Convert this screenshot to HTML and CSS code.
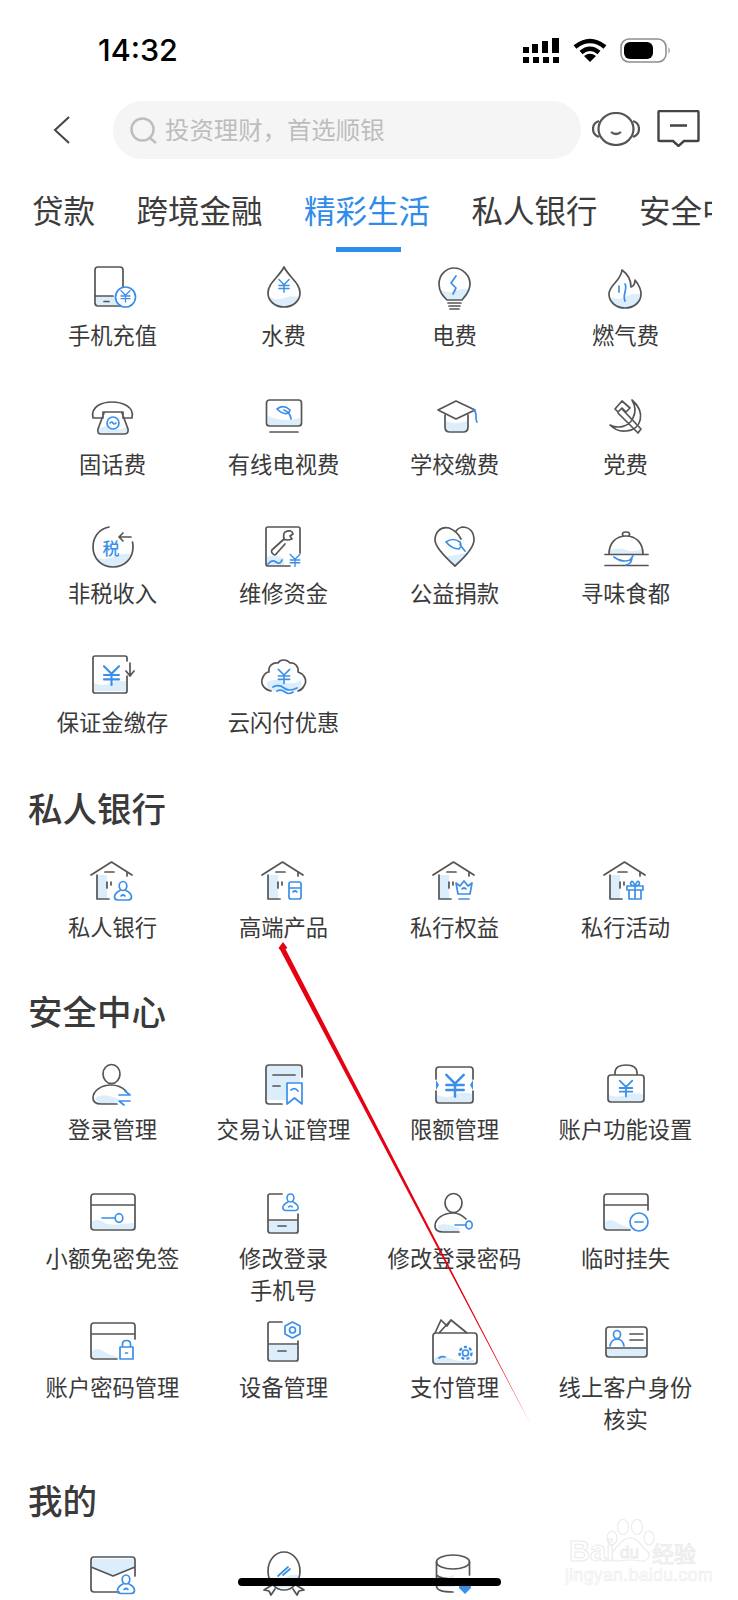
FILE: index.html
```html
<!DOCTYPE html>
<html lang="zh-CN">
<head>
<meta charset="utf-8">
<title>精彩生活</title>
<link rel="stylesheet" href="styles.css">
</head>
<body>
<svg class="defs" aria-hidden="true"><defs>
  <g id="y"><path class="b" d="M-6-7 0-1 6-7M0-1V8M-6 0H6M-6 3.500H6"/></g>
  <g id="house">
    <path class="f" d="M14 20h10v24H14z"/>
    <path class="s" d="M8 20 28.500 7 49 20M14 20V44H26M22 17H31M44 17v4M24 27v6M28 27v3"/>
  </g>
  <g id="person"><path class="b" d="M0-9a3.800 4.500 0 0 1 0 9 3.800 4.500 0 0 1 0-9zM-3 0C-7 2-8.500 5-8.500 6.500-8.500 8.500-7 9.500-5 9.500H5C7 9.500 8.500 8.500 8.500 6.500 8.500 5 7 2 3 0M-2 5.500Q0 3.500 2 5.500"/></g>
  <g id="card">
    <path class="f" d="M9 43V36Q14 32 20 36T38 43z"/>
    <path class="s" d="M34 44H11Q8 44 8 41V11Q8 8 11 8H49Q52 8 52 11V24M8 19H52"/>
  </g>
</defs></svg>

<div class="status">
  <span class="time">14:32</span>
  <div class="status-icons">
    <svg class="sig" viewBox="0 0 37 25"><path d="M0 9h6v6H0zM9 6h6v9H9zM19 3h6v12h-6zM29 0h7v15h-7zM0 19h6v6H0zM10 19h6v6h-6zM20 19h6v6h-6zM30 19h6v6h-6z"/></svg>
    <svg class="wifi" viewBox="0 0 34 24"><path class="wf" d="M2 9Q17-3 32 9"/><path class="wf" d="M8 14.500Q17 7 26 14.500"/><path d="M17 24 11 18Q17 13.500 23 18z"/></svg>
    <svg class="batt" viewBox="0 0 52 25"><rect x="1" y="1" width="45" height="23" rx="8" fill="#fff" stroke="#8f8f8f" stroke-width="1.600"/><rect x="4" y="4" width="29" height="17" rx="6"/><path d="M48.500 9q2.500 3.500 0 7z" fill="#8f8f8f"/></svg>
  </div>
</div>

<div class="searchbar">
  <svg class="back" viewBox="0 0 17 28"><path d="M16 1 2 14 16 27"/></svg>
  <div class="field">
    <svg class="mag" viewBox="0 0 27 27"><circle cx="12.500" cy="12.500" r="11"/><path d="M20 21 26 26"/></svg>
    <span class="hint">投资理财，首选顺银</span>
  </div>
  <svg class="robot" viewBox="0 0 48 34"><path d="M7 9Q1 11 1 17T7 25M41 9Q47 11 47 17T41 25"/><ellipse cx="24" cy="17" rx="17.500" ry="16"/><path d="M19 20Q24 24 29 20"/></svg>
  <svg class="msg" viewBox="0 0 43 37"><path d="M1.500 2Q1.500 1 3 1H40Q41.500 1 41.500 2V30Q41.500 31 40 31H27L21.500 36 16 31H3Q1.500 31 1.500 30zM13 15.500H30"/></svg>
</div>

<nav class="tabs">
  <span class="tab">贷款</span>
  <span class="tab">跨境金融</span>
  <span class="tab active">精彩生活</span>
  <span class="tab">私人银行</span>
  <span class="tab">安全中心</span>
</nav>

<section class="grid">
  <div class="item"><svg class="icon" viewBox="0 0 60 52"><path class="f" d="M13 33H39V42H13z"/><rect class="s" x="12" y="4" width="28" height="39" rx="3"/><path class="s" d="M12 33H30M21 38.500H26"/><circle class="bw" cx="42.500" cy="34" r="10"/><use href="#y" transform="translate(42.500,33) scale(.75)"/></svg><p class="label">手机充值</p></div>
  <div class="item"><svg class="icon" viewBox="0 0 60 52"><path class="f" d="M15 34Q23 38 30 35T45 34Q43 44 30 44T15 34z"/><path class="s" d="M30 4C25 14 14 20 14 30 14 38 21 44 30 44S46 38 46 30C46 20 35 14 30 4z"/><use href="#y" transform="translate(30,22.500) scale(.85)"/></svg><p class="label">水费</p></div>
  <div class="item"><svg class="icon" viewBox="0 0 60 52"><path class="f" d="M16 27Q24 31 30 28T43 26Q41 32 37 36H22Q18 32 16 27z"/><path class="s" d="M22 37C18 33 14 29 14 21 14 12 21 5 29 5S45 12 45 21C45 29 40 33 37 37zM23 40H36M24 43H35M25 46H34"/><path class="b" d="M31 13 26 20 31 25 28 31"/></svg><p class="label">电费</p></div>
  <div class="item"><svg class="icon" viewBox="0 0 60 52"><path class="f" d="M15 34Q22 38 29 34T44 31Q43 44 29 44T15 34z"/><path class="s" d="M26 7C33 12 35 18 35 24 38 23 39 20 39 17 43 22 45 27 45 31 45 39 38 45 29 45S13 39 13 31C13 22 25 18 26 7z"/><path class="b" d="M23 23V29M29 21C32 26 26 32 29 38"/></svg><p class="label">燃气费</p></div>

  <div class="item"><svg class="icon" viewBox="0 0 60 52"><path class="f" d="M16 36Q24 33 30 36T44 35L46 41H15z"/><path class="s" d="M10 26C7 14 20 10 29 10S52 14 49 26H40V20H20V26zM21 21 15 37Q14 42 18 42H41Q46 42 45 37L39 21"/><circle class="b" cx="30" cy="31" r="6"/><path class="b" d="M27 31Q29 29 30 31T33 31"/></svg><p class="label">固话费</p></div>
  <div class="item"><svg class="icon" viewBox="0 0 60 52"><path class="f" d="M14 24Q24 28 32 28T46 26V33H14z"/><rect class="s" x="12.500" y="8" width="35" height="26" rx="3"/><path class="s" d="M16 40H44"/><path class="b" d="M23 17Q30 12 36 18 35 23 29 21Q26 20 23 17zM30 18Q36 20 37 27"/></svg><p class="label">有线电视费</p></div>
  <div class="item"><svg class="icon" viewBox="0 0 60 52"><path class="f" d="M21 29Q30 33 42 29V35Q42 39 38 39H25Q21 39 21 35z"/><path class="s" d="M13 18 31 9 50 18 31 27zM20 23V35Q20 40 25 40H38Q43 40 43 35V23"/><path class="b" d="M48 17C54 22 49 26 52 30"/></svg><p class="label">学校缴费</p></div>
  <div class="item"><svg class="icon" viewBox="0 0 60 52"><path class="s" d="M36 8C50 20 46 38 30 39 22 40 17 36 14 33 22 37 33 35 37 26 40 20 39 13 36 8zM19 17 26 9 34 16 30 20 26 16 22 20zM26 17 45 37 42 41 22 21"/></svg><p class="label">党费</p></div>

  <div class="item"><svg class="icon" viewBox="0 0 60 52"><path class="f" d="M12 36Q22 40 30 36T47 33Q44 46 30 46T12 36z"/><path class="s" d="M26 6C16 8 10 16 10 26 10 37 18 46 30 46S50 37 50 26Q50 24 49.500 21M48 16H36M36 16 40 12M36 16 40 20"/><text class="tax" x="28" y="34">税</text></svg><p class="label">非税收入</p></div>
  <div class="item"><svg class="icon" viewBox="0 0 60 52"><path class="f" d="M13 36Q22 32 30 38V45H13z"/><path class="s" d="M36 45H14Q12 45 12 43V8Q12 6 14 6H44Q46 6 46 8V32M19 28 30 18M31 11Q38 8 39 13L36 15 38 18Q33 20 30 18 29 13 31 11zM19 28Q16 30 19 33 21 35 23 32L31 23"/><path class="b" d="M14 43Q18 38 22 41T28 39M32 37"/><use href="#y" transform="translate(41,39) scale(.8)"/></svg><p class="label">维修资金</p></div>
  <div class="item"><svg class="icon" viewBox="0 0 60 52"><path class="f" d="M17 34Q24 36 31 34T42 32 30 45z"/><path class="s" d="M24 7C15 5 10 12 10 19 10 26 20 36 30 45 40 36 49 26 49 19 49 11 45 6 37 6Q33 7 31 10M24 7Q32 10 36 18"/><path class="b" d="M21 21Q28 16 35 21 37 25 34 28 27 28 21 21zM35 24 40 30"/></svg><p class="label">公益捐款</p></div>
  <div class="item"><svg class="icon" viewBox="0 0 60 52"><path class="f" d="M14 29Q24 26 30 29T46 28L47 33H14z"/><path class="s" d="M13 33C13 22 20 15 30 15S47 22 47 33M27 15Q25 11 30 11T33 15M9 33.500H52M9 44.500H52"/><path class="b" d="M18 36Q26 42 34 39L37 35M36 36Q36 43 30 44"/></svg><p class="label">寻味食都</p></div>

  <div class="item"><svg class="icon" viewBox="0 0 60 52"><path class="f" d="M11 33Q20 37 28 33T45 32V41H11z"/><path class="s" d="M44 26V41Q44 43 42 43H12Q10 43 10 41V8Q10 6 12 6H42Q44 6 44 8V11M47 13V26M43 21 47 26 51 21"/><use href="#y" transform="translate(28.500,25) scale(1.250)"/></svg><p class="label">保证金缴存</p></div>
  <div class="item"><svg class="icon" viewBox="0 0 60 52"><path class="f" d="M13 32Q22 28 30 32T47 30Q49 38 42 41H18Q11 38 13 32z"/><path class="s" d="M17 41C9 39 6 33 9 27 11 23 13 22 15 22 14 16 19 12 24 13 26 9 33 9 36 13 41 12 45 17 44 22 50 24 54 30 50 36Q48 40 44 41"/><use href="#y" transform="translate(30,26) scale(.95)"/><path class="b" d="M19 37Q25 34 30 38T43 38M23 41Q27 39 31 42T39 42"/></svg><p class="label">云闪付优惠</p></div>
</section>

<h2 class="head head-a">私人银行</h2>
<section class="grid">
  <div class="item"><svg class="icon" viewBox="0 0 60 52"><use href="#house"/><use href="#person" transform="translate(40,35.500)"/></svg><p class="label">私人银行</p></div>
  <div class="item"><svg class="icon" viewBox="0 0 60 52"><use href="#house"/><path class="b" d="M35 29Q35 27 37 27H45Q47 27 47 29V33H35zM35 33V42Q35 44 37 44H45Q47 44 47 42V33M39 37Q41 35 43 37"/></svg><p class="label">高端产品</p></div>
  <div class="item"><svg class="icon" viewBox="0 0 60 52"><use href="#house"/><path class="b" d="M31 28 35 31 39 26 43 31 47 28 45 39H33zM34 44H44M37 34Q39 32 41 34"/></svg><p class="label">私行权益</p></div>
  <div class="item"><svg class="icon" viewBox="0 0 60 52"><use href="#house"/><path class="b" d="M31 31H47V35H31zM33 35V44H45V35M39 31V44M39 31Q33 30 35 27 37 25 39 31 41 25 43 27 45 30 39 31"/></svg><p class="label">私行活动</p></div>
</section>

<h2 class="head head-b">安全中心</h2>
<section class="grid">
  <div class="item"><svg class="icon" viewBox="0 0 60 52"><path class="f" d="M12 41Q18 37 26 39T36 42 30 47H16z"/><ellipse class="s" cx="28.500" cy="17" rx="8.500" ry="9.500"/><path class="s" d="M34 47H18C12 47 10 44 10 41 10 34 18 28 28 28 34 28 40 31 43 34"/><path class="b" d="M36 38H47L42 34M47 44H36L41 48"/></svg><p class="label">登录管理</p></div>
  <div class="item"><svg class="icon" viewBox="0 0 60 52"><path class="f" d="M13 10Q13 9 15 9H46V28H33V43H13z"/><path class="s" d="M28 47H15Q12 47 12 44V11Q12 8 15 8H45Q48 8 48 11V20M19 18H41M19 29H26"/><path class="bw" d="M33 26H48V47L40.500 41 33 47z"/><path class="b" d="M37 33Q41 30 44 34"/></svg><p class="label">交易认证管理</p></div>
  <div class="item"><svg class="icon" viewBox="0 0 60 52"><path class="f" d="M12 38Q22 42 30 38T47 37V43Q47 45 45 45H14Q12 45 12 43z"/><path class="s" d="M11 22V13Q11 10 14 10H45Q48 10 48 13V22M11 34V43Q11 46 14 46H45Q48 46 48 43V34"/><path class="bf" d="M11 23 14 28 11 33zM48 23 45 28 48 33z"/><use href="#y" transform="translate(30,28) scale(1.450)"/></svg><p class="label">限额管理</p></div>
  <div class="item"><svg class="icon" viewBox="0 0 60 52"><path class="f" d="M13 38Q22 41 30 38T47 37V42Q47 44 45 44H15Q13 44 13 42z"/><path class="s" d="M19 18V16C19 10 24 8 30 8S41 10 41 16V18M15 18H45Q48 18 48 21V42Q48 45 45 45H15Q12 45 12 42V21Q12 18 15 18z"/><use href="#y" transform="translate(30,31) scale(1.050)"/></svg><p class="label">账户功能设置</p></div>

  <div class="item"><svg class="icon" viewBox="0 0 60 52"><path class="f" d="M9 43V36Q14 32 20 36T40 38L51 37V43z"/><path class="s" d="M11 44Q8 44 8 41V11Q8 8 11 8H49Q52 8 52 11V41Q52 44 49 44zM8 19H52"/><path class="b" d="M19 32H32"/><ellipse class="b" cx="36" cy="32" rx="3.800" ry="4.300"/></svg><p class="label">小额免密免签</p></div>
  <div class="item"><svg class="icon" viewBox="0 0 60 52"><path class="f" d="M14 35H44V46H14z"/><path class="s" d="M28 8H16Q14 8 14 10V44Q14 47 16 47H42Q44 47 44 45V28M14 34H44M24 40H32"/><use href="#person" transform="translate(36.500,16) scale(.9)"/></svg><p class="label">修改登录<br>手机号</p></div>
  <div class="item"><svg class="icon" viewBox="0 0 60 52"><path class="f" d="M12 40Q18 37 24 39T34 42 30 46H16z"/><ellipse class="s" cx="28.500" cy="17" rx="8.500" ry="9.500"/><path class="s" d="M34 46H18C12 46 10 43 10 40 10 33 18 27 28 27 34 27 38 30 41 33"/><path class="b" d="M30 39H41"/><ellipse class="b" cx="44" cy="39" rx="3.200" ry="3.800"/></svg><p class="label">修改登录密码</p></div>
  <div class="item"><svg class="icon" viewBox="0 0 60 52"><use href="#card"/><circle class="bw" cx="43" cy="36" r="9"/><path class="b" d="M39 36H47"/></svg><p class="label">临时挂失</p></div>

  <div class="item"><svg class="icon" viewBox="0 0 60 52"><use href="#card"/><path class="b" d="M37 32H50V44H37zM39.500 32V29Q39.500 25.500 43.500 25.500T47.500 29V32M42.500 38H44.500"/></svg><p class="label">账户密码管理</p></div>
  <div class="item"><svg class="icon" viewBox="0 0 60 52"><path class="f" d="M14 30H44V45H14z"/><path class="s" d="M28 7H16Q14 7 14 9V43Q14 46 16 46H42Q44 46 44 44V26M14 29H44M24 36H32"/><path class="b" d="M38.500 7 46 11V19L38.500 23 31 19V11z"/><circle class="b" cx="38.500" cy="15" r="3"/></svg><p class="label">设备管理</p></div>
  <div class="item"><svg class="icon" viewBox="0 0 60 52"><path class="f" d="M9 44Q14 38 22 42T38 46L49 45V48H9z"/><path class="s" d="M11 18H49Q52 18 52 21V46Q52 49 49 49H11Q8 49 8 46V21Q8 18 11 18zM10 18 16 5 22 11M14 18 26 5 42 18M22 11 26 5"/><circle class="b" cx="40.500" cy="38" r="3"/><circle class="bd" cx="40.500" cy="38" r="6"/><path class="b" d="M14 43Q17 41 20 42"/></svg><p class="label">支付管理</p></div>
  <div class="item"><svg class="icon" viewBox="0 0 60 52"><path class="f" d="M11 32H50V41H11z"/><rect class="s" x="10" y="12" width="41" height="30" rx="3"/><path class="s" d="M34 19H47M34 25H47M11 33H50"/><path class="b" d="M21 15.500a3.500 4 0 0 1 0 8 3.500 4 0 0 1 0-8zM14 31C15 26 18 24 21 24S27 26 28 31"/></svg><p class="label">线上客户身份<br>核实</p></div>
</section>

<h2 class="head head-c">我的</h2>
<section class="grid">
  <div class="item"><svg class="icon" viewBox="0 0 60 52"><path class="f" d="M9 10H51V19L30 27 9 19z"/><path class="s" d="M36 43H11Q8 43 8 40V11Q8 8 11 8H49Q52 8 52 11V27M8 18 30 27 52 18"/><use href="#person" transform="translate(43,35)"/></svg></div>
  <div class="item"><svg class="icon" viewBox="0 0 60 52"><path class="f" d="M14 28Q24 32 32 28T46 27Q44 38 30 39T14 28z"/><ellipse class="s" cx="30" cy="22" rx="16" ry="19"/><path class="s" d="M18 36 10 41 15 42 17 46 21 40M42 36 50 41 45 42 43 46 39 40"/><path class="b" d="M24 27 34 18M29 26 36 20"/></svg></div>
  <div class="item"><svg class="icon" viewBox="0 0 60 52"><path class="f" d="M12 26Q20 30 28 26L30 38H12z"/><ellipse class="s" cx="28" cy="13" rx="16.500" ry="7"/><path class="s" d="M11.500 13V37C11.500 41 18 43 28 43M44.500 13V26M11.500 26C14 29 20 30 30 30"/><path class="bf" d="M34 32H46V39L40 45 34 39z"/></svg></div>
</section>

<svg class="arrow" viewBox="0 0 738 1600" aria-hidden="true"><path d="M283 942 287.500 948 285.500 949 531 1425 280.500 950.500 278.500 948z"/></svg>

<div class="mark" aria-hidden="true">
  <svg class="paw" viewBox="0 0 60 44"><ellipse cx="10" cy="19" rx="5" ry="7"/><ellipse cx="21" cy="8" rx="5.500" ry="7.500"/><ellipse cx="35" cy="8" rx="5.500" ry="7.500"/><ellipse cx="47" cy="19" rx="5" ry="7"/><path d="M28 19C20 19 17 27 11 32 6 38 11 43 18 42Q28 40 38 42C46 43 50 37 45 32 39 27 36 19 28 19z"/></svg>
  <span class="bai">Bai</span><span class="du">du</span><span class="jy">经验</span>
  <span class="url">jingyan.baidu.com</span>
</div>
<div class="homebar"></div>
</body>
</html>
```

FILE: styles.css
```css
* { box-sizing: border-box; }
html, body { margin: 0; padding: 0; }
body {
  position: relative;
  width: 738px;
  height: 1600px;
  overflow: hidden;
  background: #fff;
  color: #3a3a3a;
  font-family: "Noto Sans CJK SC", "Noto Sans", sans-serif;
}
.defs { display: block; width: 0; height: 0; }

.status {
  display: flex;
  align-items: center;
  justify-content: space-between;
  height: 101px;
  padding: 0 66px 1px 98px;
}
.time { font: 500 30.500px/1 Inter, sans-serif; color: #000; }
.status-icons { display: flex; align-items: center; gap: 13px; }
.sig { width: 37px; height: 25px; }
.wifi { width: 34px; height: 24px; }
.batt { width: 52px; height: 25px; }
.wf { fill: none; stroke: #000; stroke-width: 4.500; }

.searchbar {
  display: flex;
  align-items: center;
  height: 58px;
  padding-left: 53px;
}
.back { width: 17px; height: 28px; margin-right: 43px; margin-top: -1px; fill: none; stroke: #444; stroke-width: 2; }
.field {
  display: flex;
  align-items: center;
  gap: 8px;
  width: 468px;
  height: 58px;
  padding-left: 17px;
  border-radius: 29px;
  background: #f5f5f5;
  color: #bdbdbd;
  font-size: 24.400px;
  white-space: nowrap;
}
.hint { margin-top: -4px; }
.mag { width: 27px; height: 27px; fill: none; stroke: #bdbdbd; stroke-width: 2.400; }
.robot { width: 48px; height: 34px; margin-left: 11px; margin-top: -2px; fill: #fff; stroke: #555; stroke-width: 2.200; }
.msg { width: 43px; height: 37px; margin-left: 17px; margin-top: -3px; fill: none; stroke: #444; stroke-width: 2.400; }

.tabs {
  display: flex;
  gap: 41.500px;
  width: 680px;
  height: 104px;
  margin-left: 32px;
  overflow: hidden;
  white-space: nowrap;
}
.tab {
  position: relative;
  flex: none;
  height: 94px;
  font-size: 31.500px;
  line-height: 100px;
  color: #3c3c3c;
}
.tab.active { color: #2f8ceb; }
.tab.active::after {
  content: "";
  position: absolute;
  left: 32px;
  bottom: 1px;
  width: 65px;
  height: 5px;
  background: #2f8ceb;
}

.grid {
  display: grid;
  grid-template-columns: repeat(4, 171px);
  grid-auto-rows: 129px;
  padding: 0 0 0 27px;
}
.item { display: flex; flex-direction: column; align-items: center; }
.icon { display: block; width: 60px; height: 52px; overflow: visible; }
.label {
  margin: 4px 0 0;
  font-size: 22.300px;
  line-height: 31.500px;
  text-align: center;
  white-space: nowrap;
  color: #3a3a3a;
}
.s, .b, .bw, .bd { fill: none; stroke-width: 1.700; stroke-linecap: round; stroke-linejoin: round; }
.s { stroke: #555; }
.b, .bw, .bd { stroke: #3b8fe8; }
.bw { fill: #fff; }
.bd { stroke-width: 2.400; stroke-dasharray: 3 2.200; stroke-linecap: butt; }
.bf { fill: #3b8fe8; }
.f { fill: #dcedfb; }
.tax { font-size: 17px; font-weight: 500; fill: #3b8fe8; text-anchor: middle; }

.head {
  margin: 0 0 24px 28px;
  font-size: 34.500px;
  font-weight: 500;
  line-height: 44px;
  color: #3a3a3a;
}
.head-a { margin-top: 6px; margin-bottom: 26px; }
.head-b { margin-top: 4px; margin-bottom: 25px; }
.head-c { margin-top: 33px; margin-bottom: 28px; }

.arrow { position: absolute; left: 0; top: 0; width: 738px; height: 1600px; pointer-events: none; }
.arrow path { fill: #e60012; }

.mark {
  position: absolute;
  left: 560px;
  top: 1515px;
  width: 145px;
  height: 72px;
  color: #fff;
  font-family: "Liberation Sans", sans-serif;
}
.mark span { position: absolute; -webkit-text-stroke: 1px #ebebeb; }
.paw { position: absolute; left: 42px; top: 4px; width: 60px; height: 44px; fill: #fff; stroke: #ebebeb; stroke-width: 1.200; }
.bai { left: 9px; top: 19px; font-size: 29px; font-weight: 700; line-height: 34px; }
.du { left: 60px; top: 29px; font-size: 17px; line-height: 18px; }
.jy { left: 92px; top: 23px; font-family: "Noto Sans CJK SC", sans-serif; font-size: 22px; line-height: 28px; }
.url { left: 5px; top: 50px; font-size: 17.500px; line-height: 20px; letter-spacing: .4px; -webkit-text-stroke-width: .6px !important; white-space: nowrap; }

.homebar {
  position: absolute;
  left: 238px;
  top: 1578px;
  width: 263px;
  height: 8px;
  border-radius: 4px;
  background: #000;
}
```
